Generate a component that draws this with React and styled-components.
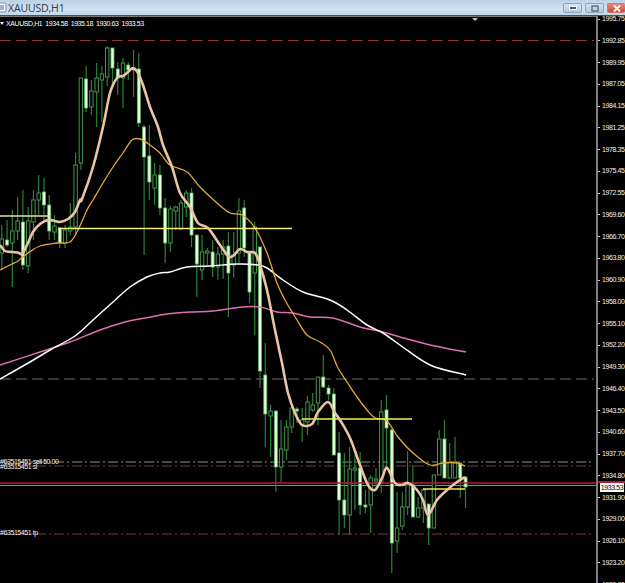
import React from 'react';
import styled, { createGlobalStyle } from 'styled-components';

const GlobalStyle = createGlobalStyle`
	html, body {
		margin: 0;
		background: #000;
	}
	body {
		font-family: 'Liberation Sans', Arial, sans-serif;
	}
`;

const Page = styled.div`
	width: 625px;
	height: 583px;
	overflow: hidden;
	display: flex;
	flex-direction: column;
	background: #000;
`;

const TitleBar = styled.div`
	flex: 0 0 16px;
	display: flex;
	align-items: center;
	justify-content: space-between;
	box-sizing: border-box;
	border-bottom: 1px solid #4a5058;
	background: linear-gradient(#bcd2e6, #cfe0f0 55%, #c4d8ea);
`;

const TitleLeft = styled.div`
	display: flex;
	align-items: center;
`;

const TitleText = styled.span`
	font-family: 'Open Sans', sans-serif;
	font-size: 10.5px;
	color: #2c3a48;
	margin-left: 1px;
	letter-spacing: -0.15px;
`;

const WindowButtons = styled.div`
	display: flex;
	gap: 3px;
	align-self: flex-start;
	margin-top: 3px;
`;

const WinButton = styled.div`
	width: ${({ $close }) => ($close ? 18 : 19)}px;
	height: 10px;
	display: flex;
	align-items: center;
	justify-content: center;
	border: 1px solid ${({ $close }) => ($close ? '#c9786a' : '#8ea6bf')};
	border-right: ${({ $close }) => ($close ? 'none' : undefined)};
	border-radius: 2px;
	background: ${({ $close }) =>
		$close
			? 'linear-gradient(#e48a78, #cf4d3a)'
			: 'linear-gradient(#d5e3f0, #b3cbe2)'};
	box-sizing: border-box;
`;

const ChartBody = styled.div`
	flex: 1;
	display: flex;
	min-height: 0;
`;

const Plot = styled.div`
	flex: 0 0 596px;
	position: relative;
	overflow: hidden;
	border-top: 1px solid #777;
	box-sizing: border-box;
`;

const ChartSvg = styled.svg`
	display: block;
	position: absolute;
	left: 0;
	top: -1px;
	filter: blur(0.3px);
`;

const SymbolInfo = styled.div`
	position: absolute;
	left: 6px;
	top: 3px;
	display: flex;
	gap: 3px;
	font-size: 7px;
	line-height: 8px;
	letter-spacing: -0.42px;
	color: #fff;
	white-space: nowrap;
`;

const OrderTag = styled.span`
	position: absolute;
	left: 0;
	top: ${({ $top }) => $top}px;
	font-size: 7px;
	line-height: 7px;
	letter-spacing: -0.42px;
	color: #f2f2f2;
	white-space: nowrap;
`;

const Axis = styled.div`
	flex: 1;
	position: relative;
	box-sizing: border-box;
	border-left: 2px solid #808080;
	overflow: hidden;
`;

const AxisRow = styled.div`
	height: 21.76px;
	display: flex;
	align-items: flex-start;
	font-size: 7px;
	line-height: 6px;
	letter-spacing: -0.42px;
	color: #f0f0f0;
	&::before {
		content: '';
		width: 2px;
		height: 1px;
		margin: 2.5px 2px 0 0;
		background: #ccc;
	}
`;

const PriceBox = styled.div`
	position: absolute;
	left: 0;
	right: 0;
	top: 465px;
	height: 9px;
	border-top: 2px solid #b01c2e;
	display: flex;
	align-items: center;
	padding-left: 2px;
	font-size: 7px;
	letter-spacing: -0.42px;
	color: #000;
`;

const PriceValue = styled.span`
	background: #fff;
	width: 24px;
	height: 9px;
	line-height: 9px;
	text-align: center;
`;

const axisLabels = [
	'1995.75', '1992.85', '1989.95', '1987.05', '1984.15', '1981.25', '1978.35',
	'1975.45', '1972.55', '1969.60', '1966.70', '1963.80', '1960.90', '1958.00',
	'1955.10', '1952.20', '1949.30', '1946.40', '1943.50', '1940.60', '1937.70',
	'1934.80', '1931.90', '1929.00', '1926.10', '1923.20', '1920.30',
];

// high, body top, body bottom, low, filled (in page pixels)
const candles = [
	[225, 239, 253, 270, 0], [220, 240, 245, 247, 1], [210, 231, 243, 287, 0], [197, 221, 231, 240, 0],
	[190, 222, 265, 270, 1], [207, 221, 266, 273, 0], [190, 200, 222, 240, 0], [175, 193, 200, 215, 0],
	[178, 192, 205, 220, 1], [195, 205, 231, 240, 1], [215, 226, 232, 240, 0], [227, 228, 243, 248, 1],
	[225, 230, 243, 248, 0], [203, 227, 231, 235, 0], [153, 165, 227, 235, 0], [78, 78, 163, 170, 0],
	[66, 79, 108, 112, 1], [80, 91, 107, 115, 0], [63, 78, 92, 127, 0], [66, 74, 80, 122, 0],
	[46, 48, 77, 86, 0], [48, 48, 68, 83, 1], [62, 69, 78, 95, 1], [58, 63, 78, 108, 0],
	[62, 65, 70, 80, 1], [50, 68, 70, 97, 1], [53, 69, 123, 127, 1], [125, 127, 157, 255, 1],
	[125, 156, 182, 200, 1], [163, 175, 188, 205, 0], [165, 175, 208, 215, 1], [198, 208, 243, 263, 1],
	[206, 209, 243, 252, 0], [206, 207, 211, 230, 0], [200, 203, 229, 230, 0], [190, 193, 207, 217, 0],
	[188, 193, 235, 247, 1], [235, 235, 264, 297, 1], [235, 252, 270, 280, 0], [248, 251, 253, 265, 0],
	[240, 252, 267, 277, 1], [247, 254, 267, 280, 0], [240, 247, 254, 279, 0], [232, 246, 273, 317, 1],
	[232, 255, 265, 278, 0], [198, 211, 253, 263, 0], [200, 208, 248, 257, 1], [253, 253, 292, 303, 1],
	[222, 227, 273, 335, 0], [247, 247, 371, 388, 1], [343, 375, 414, 447, 1], [405, 411, 416, 457, 0],
	[411, 411, 467, 492, 1], [420, 449, 467, 482, 0], [420, 427, 450, 460, 0], [403, 408, 427, 433, 0],
	[407, 409, 411, 423, 1], [408, 420, 425, 442, 0], [396, 402, 422, 435, 0], [393, 405, 410, 412, 0],
	[377, 377, 403, 425, 0], [355, 377, 387, 388, 1], [385, 388, 394, 400, 1], [388, 394, 455, 455, 1],
	[432, 453, 500, 535, 1], [453, 500, 515, 528, 1], [447, 469, 515, 535, 0], [455, 468, 470, 510, 0],
	[452, 468, 505, 515, 1], [490, 505, 507, 513, 1], [475, 478, 505, 533, 0], [468, 479, 481, 490, 0],
	[400, 412, 483, 493, 0], [395, 410, 428, 468, 1], [428, 430, 543, 573, 1], [492, 528, 541, 553, 0],
	[492, 507, 526, 530, 0], [451, 485, 507, 515, 0], [465, 485, 517, 517, 1], [497, 508, 517, 518, 0],
	[488, 490, 508, 523, 0], [504, 504, 528, 545, 1], [475, 475, 528, 528, 0], [430, 439, 475, 475, 0],
	[420, 439, 478, 478, 1], [443, 462, 478, 478, 0], [437, 462, 478, 478, 0], [463, 463, 478, 498, 1],
	[477, 477, 487, 508, 1],
];

const fastMa = '0,245 5,251 12,252 18,252.5 22,254 27,245 33,232 40,224 48,220 55,221 60,222 68,219 75,212 80,200 82,199 93,167 103,127 110,93 117,78 123,76 128,72 133,68 138,73 143,85 150,107 158,127 163,145 172,167 180,193 190,207 198,223 208,228 220,245 228,256 233,256 240,249 247,252 255,253 260,265 267,290 275,330 282,363 288,393 295,413 302,425 312,424 318,412 328,402 335,413 340,420 350,438 360,465 368,485 375,490 382,478 387,468 395,483 402,485 408,483 417,490 423,500 428,515 437,500 447,490 457,482 465,477';
const slowMa = '0,270 10,265 18,261 28,253 40,246 57,243 70,242 78,230 87,210 93,200 103,183 113,167 123,153 132,140 140,139 150,145 160,153 170,165 187,172 200,187 217,203 230,213 242,215 255,228 267,253 277,283 285,300 297,320 307,335 320,342 330,350 338,368 347,382 357,397 367,410 375,418 387,421 398,437 413,453 430,465 443,463 457,463 465,466';
const whiteMa = '0,379 30,362 50,350 75,336 93,320 113,302 130,287 147,277 160,273 170,272 187,267 210,266 237,264 258,265 267,268 283,280 303,292 330,300 347,310 367,325 383,333 400,345 430,365 466,375';
const pinkMa = '0,365 40,352 70,342 100,330 125,322 145,318 167,314 190,312 213,311 242,307 260,307 277,312 293,313 310,317 333,318 360,327 383,332 400,337 430,345 466,352';

const levels = [
	{ y: 40.5, color: '#8a3c40', dash: '11 5', width: 1.2 },
	{ y: 379, color: '#6e6e6e', dash: '11 5', width: 1.2 },
	{ y: 462, color: '#7f9a84', dash: '10 3 2 3', width: 1.2 },
	{ y: 466, color: '#7c3a3a', dash: '10 3 2 3', width: 1 },
	{ y: 534, color: '#7c3a3a', dash: '10 3 2 3', width: 1 },
];

// turn a point list into a smooth curve so the averages don't show kinks
const smooth = (list) => {
	const p = list.split(' ').map((s) => s.split(',').map(Number));
	let d = `M${p[0][0]} ${p[0][1]}`;
	for (let i = 0; i < p.length - 1; i++) {
		const a = p[i - 1] || p[i];
		const b = p[i];
		const c = p[i + 1];
		const e = p[i + 2] || c;
		const c1x = b[0] + (c[0] - a[0]) / 6;
		const c1y = b[1] + (c[1] - a[1]) / 6;
		const c2x = c[0] - (e[0] - b[0]) / 6;
		const c2y = c[1] - (e[1] - b[1]) / 6;
		d += ` C${c1x} ${c1y} ${c2x} ${c2y} ${c[0]} ${c[1]}`;
	}
	return d;
};

const TradeLine = ({ x1, x2, y, color }) => (
	<line x1={x1} x2={x2} y1={y} y2={y} stroke={color} strokeWidth='1.3' />
);

const Candle = ({ x, data }) => {
	const [high, top, bottom, low, filled] = data;
	const w = filled ? 3 : 3.4;
	return (
		<g>
			<line x1={x} x2={x} y1={high} y2={low} stroke='#2a8036' strokeWidth='1.2' />
			<rect
				x={x - w / 2}
				y={top}
				width={w}
				height={bottom - top}
				fill={filled ? '#e6ffdc' : '#000'}
				stroke={filled ? '#62b868' : '#469650'}
				strokeWidth={filled ? 0.8 : 1}
			/>
		</g>
	);
};

const App = () => {
	return (
		<Page>
			<GlobalStyle />
			<TitleBar>
				<TitleLeft>
					<svg width='7' height='11' viewBox='0 0 7 11'>
						<rect x='-3' y='1' width='9' height='9' rx='1' fill='#eef4fa' stroke='#7f93a8' />
						<rect x='-1' y='3' width='5' height='5' fill='#9db4cc' />
					</svg>
					<TitleText>XAUUSD,H1</TitleText>
				</TitleLeft>
				<WindowButtons>
					<WinButton>
						<svg width='8' height='4' viewBox='0 0 8 4'>
							<rect x='0.5' y='0.5' width='7' height='3' fill='#4a5a6c' stroke='#fff' />
						</svg>
					</WinButton>
					<WinButton>
						<svg width='8' height='7' viewBox='0 0 8 7'>
							<rect x='1' y='1' width='6' height='5' fill='none' stroke='#4a5a6c' strokeWidth='1.2' />
						</svg>
					</WinButton>
					<WinButton $close>
						<svg width='8' height='7' viewBox='0 0 8 7'>
							<path d='M1 0.5 L7 6.5 M7 0.5 L1 6.5' stroke='#fff' strokeWidth='1.8' />
						</svg>
					</WinButton>
				</WindowButtons>
			</TitleBar>
			<ChartBody>
				<Plot>
					<ChartSvg width='596' height='567' viewBox='0 16 596 567'>
						<polygon points='0,22 4,22 2,25' fill='#eee' />
						<polygon points='472,18 478,18 475,21' fill='#ccc' />
						{levels.map((level) => (
							<line
								key={level.y}
								x1='0'
								x2='594'
								y1={level.y}
								y2={level.y}
								stroke={level.color}
								strokeWidth={level.width}
								strokeDasharray={level.dash}
							/>
						))}
						<line x1='0' x2='596' y1='485.5' y2='485.5' stroke='#8a8a8a' strokeWidth='1' />
						{candles.map((c, i) => (
							<Candle key={i} x={1.8 + 5.27 * i} data={c} />
						))}
						<line x1='0' x2='596' y1='483' y2='483' stroke='#b01c3c' strokeWidth='1.4' />
						<path d={smooth(pinkMa)} fill='none' stroke='#dc70b0' strokeWidth='1.5' />
						<path d={smooth(whiteMa)} fill='none' stroke='#fff' strokeWidth='1.5' />
						<path d={smooth(slowMa)} fill='none' stroke='#e8a636' strokeWidth='1.3' />
						<TradeLine x1='0' x2='50' y='216' color='#e6e29a' />
						<TradeLine x1='58' x2='292' y='228.5' color='#f2ee80' />
						<TradeLine x1='302' x2='412' y='419' color='#f2ee50' />
						<TradeLine x1='423' x2='465' y='489' color='#f2ee50' />
						<path d={smooth(fastMa)} fill='none' stroke='#eac4a4' strokeWidth='2.6' strokeLinejoin='round' />
					</ChartSvg>
					<SymbolInfo>
						<span>XAUUSD,H1</span>
						<span>1934.58</span>
						<span>1935.18</span>
						<span>1930.63</span>
						<span>1933.53</span>
					</SymbolInfo>
					<OrderTag $top={441}>#63515451 sell 50.00</OrderTag>
					<OrderTag $top={446}>#63515451 sl</OrderTag>
					<OrderTag $top={512}>#63515451 tp</OrderTag>
				</Plot>
				<Axis>
					{axisLabels.map((label) => (
						<AxisRow key={label}>{label}</AxisRow>
					))}
					<PriceBox>
						<PriceValue>1933.53</PriceValue>
					</PriceBox>
				</Axis>
			</ChartBody>
		</Page>
	);
};

export default App;
